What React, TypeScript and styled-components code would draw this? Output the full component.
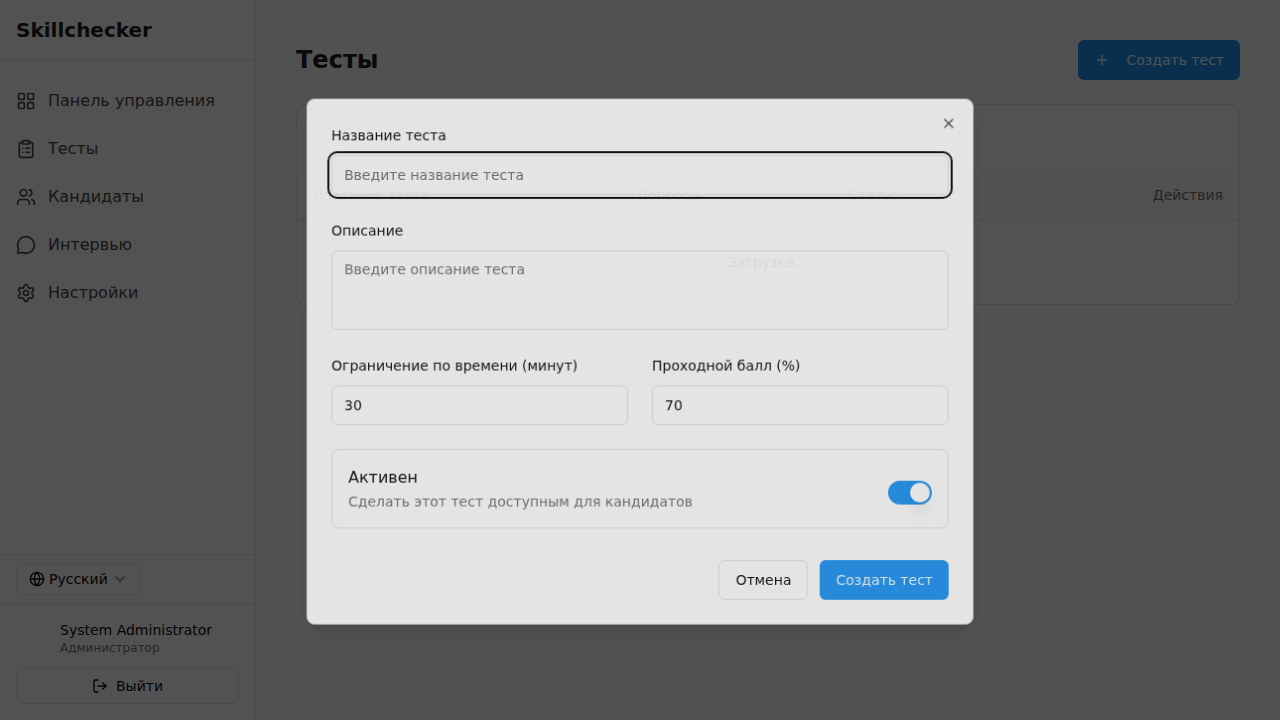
import React from "react";
import styled, { createGlobalStyle, css } from "styled-components";
import {
  LayoutGrid,
  ClipboardList,
  Users,
  MessageCircle,
  Settings,
  Globe,
  ChevronDown,
  LogOut,
  Plus,
  X,
} from "lucide-react";

const color = {
  text: "#0c0a09",
  heading: "#212121",
  muted: "#78716c",
  border: "#e7e5e4",
  primary: "#2094f3",
  nav: "#484848",
};

const GlobalStyle = createGlobalStyle`
  *, *::before, *::after { box-sizing: border-box; }
  body {
    margin: 0;
    overflow: hidden;
    color: ${color.text};
    font-family: "DejaVu Sans", sans-serif;
    font-size: 16px;
    line-height: 24px;
  }
  h1, h2, p { margin: 0; }
  button, input, textarea { font: inherit; color: inherit; }
`;

const Shell = styled.div`
  display: flex;
  height: 100vh;
  background: #fafafa;
`;

const Sidebar = styled.aside`
  display: flex;
  flex-direction: column;
  flex: 0 0 256px;
  background: #fff;
  border-right: 1px solid ${color.border};
`;

const Brand = styled.div`
  padding: 16px;
  border-bottom: 1px solid ${color.border};
  font-size: 20px;
  line-height: 28px;
  font-weight: 700;
  color: ${color.heading};
`;

const Nav = styled.nav`
  flex: 1;
  padding: 16px 0;
`;

const NavItem = styled.a`
  display: flex;
  align-items: center;
  gap: 12px;
  height: 48px;
  padding: 0 16px;
  color: ${color.nav};
`;

const LanguageBar = styled.div`
  padding: 8px 16px;
  border-top: 1px solid ${color.border};
`;

const buttonBase = css`
  display: inline-flex;
  align-items: center;
  justify-content: center;
  border-radius: 6px;
  font-size: 14px;
  line-height: 20px;
  white-space: nowrap;
`;

const LanguageButton = styled.button`
  ${buttonBase}
  display: flex;
  gap: 4px;
  height: 32px;
  padding: 0 12px;
  border: 1px solid ${color.border};
  background: #fff;
  svg:last-child { opacity: 0.5; }
`;

const Account = styled.div`
  display: flex;
  flex-direction: column;
  gap: 12px;
  padding: 16px;
  border-top: 1px solid ${color.border};
`;

const Profile = styled.div`
  display: flex;
  align-items: center;
  gap: 12px;
`;

const Avatar = styled.div`
  width: 32px;
  height: 32px;
  border-radius: 50%;
`;

const ProfileName = styled.p`
  font-size: 14px;
  line-height: 20px;
`;

const ProfileRole = styled.p`
  font-size: 12px;
  line-height: 16px;
  color: ${color.muted};
`;

const LogoutButton = styled.button`
  ${buttonBase}
  gap: 8px;
  height: 36px;
  border: 1px solid ${color.border};
  background: #fff;
`;

const Main = styled.main`
  flex: 1;
  padding: 40px;
`;

const PageHeader = styled.header`
  display: flex;
  align-items: center;
  justify-content: space-between;
  margin-bottom: 24px;
`;

const PageTitle = styled.h1`
  font-size: 24px;
  line-height: 32px;
  font-weight: 700;
  color: ${color.heading};
`;

const Button = styled.button<{ $outline?: boolean; $gap?: number }>`
  ${buttonBase}
  height: 40px;
  padding: 0 16px;
  gap: ${(p) => p.$gap ?? 0}px;
  border: ${(p) => (p.$outline ? `1px solid ${color.border}` : "0")};
  background: ${(p) => (p.$outline ? "#fff" : color.primary)};
  color: ${(p) => (p.$outline ? color.text : "#f0f8ff")};
`;

const TableCard = styled.section`
  overflow: hidden;
  border: 1px solid ${color.border};
  border-radius: 8px;
  background: #fff;
`;

const TableTools = styled.div`
  height: 66px;
`;

const HeadRow = styled.div`
  display: grid;
  grid-template-columns: 325px 210px 1fr auto;
  align-items: center;
  height: 49px;
  padding: 0 16px;
  border-bottom: 1px solid ${color.border};
  background: #fafafa;
  font-size: 14px;
  color: ${color.muted};
`;

const Loading = styled.div`
  padding: 32px 16px;
  text-align: center;
  font-size: 14px;
  line-height: 20px;
`;

const Overlay = styled.div`
  position: fixed;
  inset: 0;
  background: rgba(0, 0, 0, 0.68);
`;

const DialogLayer = styled.div`
  position: fixed;
  inset: 0;
  display: flex;
  align-items: center;
  justify-content: center;
`;

const Dialog = styled.div`
  position: relative;
  width: 672px;
  padding: 24px;
  border: 1px solid ${color.border};
  border-radius: 8px;
  background: #fff;
  box-shadow: 0 10px 15px -3px rgba(0, 0, 0, 0.1), 0 4px 6px -4px rgba(0, 0, 0, 0.1);
  opacity: 0.85;
  transform: translateY(0.3%) scale(0.9925);
  will-change: transform;
`;

const CloseButton = styled.button`
  position: absolute;
  top: 16px;
  right: 16px;
  display: flex;
  padding: 0;
  border: 0;
  background: none;
  opacity: 0.7;
`;

const Form = styled.form`
  display: flex;
  flex-direction: column;
  gap: 24px;
`;

const FieldPair = styled.div`
  display: grid;
  grid-template-columns: 1fr 1fr;
  gap: 24px;
`;

const FieldBox = styled.label`
  display: flex;
  flex-direction: column;
  gap: 8px;
  font-size: 14px;
  line-height: 24px;
`;

const control = css`
  width: 100%;
  padding: 8px 12px;
  border: 1px solid ${color.border};
  border-radius: 6px;
  outline: none;
  background: #fff;
  font-size: 14px;
  line-height: 20px;
  &::placeholder { color: ${color.muted}; opacity: 1; }
`;

const Input = styled.input<{ $focused?: boolean }>`
  ${control}
  height: 40px;
  ${(p) => p.$focused && "box-shadow: 0 0 0 2px #fff, 0 0 0 4px #0c0a09;"}
`;

const TextArea = styled.textarea`
  ${control}
  display: block;
  height: 80px;
  resize: none;
`;

const SwitchCard = styled.div`
  display: flex;
  align-items: center;
  justify-content: space-between;
  padding: 16px;
  border: 1px solid ${color.border};
  border-radius: 8px;
`;

const SwitchHint = styled.p`
  margin-top: 2px;
  font-size: 14px;
  line-height: 20px;
  color: ${color.muted};
`;

const Switch = styled.div`
  display: flex;
  justify-content: flex-end;
  width: 44px;
  height: 24px;
  margin-top: 8px;
  padding: 2px;
  border-radius: 12px;
  background: ${color.primary};
`;

const Thumb = styled.span`
  width: 20px;
  height: 20px;
  border-radius: 50%;
  background: #fff;
  box-shadow: 0 10px 15px -3px rgba(0, 0, 0, 0.1), 0 4px 6px -4px rgba(0, 0, 0, 0.1);
`;

const Actions = styled.div`
  display: flex;
  justify-content: flex-end;
  gap: 12px;
  padding-top: 8px;
`;

const navItems = [
  { icon: LayoutGrid, label: "Панель управления" },
  { icon: ClipboardList, label: "Тесты" },
  { icon: Users, label: "Кандидаты" },
  { icon: MessageCircle, label: "Интервью" },
  { icon: Settings, label: "Настройки" },
];

export default function App() {
  return (
    <>
      <GlobalStyle />
      <Shell>
        <Sidebar>
          <Brand>Skillchecker</Brand>
          <Nav>
            {navItems.map(({ icon: Icon, label }) => (
              <NavItem key={label}>
                <Icon size={20} />
                {label}
              </NavItem>
            ))}
          </Nav>
          <LanguageBar>
            <LanguageButton>
              <Globe size={16} />
              Русский
              <ChevronDown size={16} />
            </LanguageButton>
          </LanguageBar>
          <Account>
            <Profile>
              <Avatar />
              <div>
                <ProfileName>System Administrator</ProfileName>
                <ProfileRole>Администратор</ProfileRole>
              </div>
            </Profile>
            <LogoutButton>
              <LogOut size={16} />
              Выйти
            </LogoutButton>
          </Account>
        </Sidebar>
        <Main>
          <PageHeader>
            <PageTitle>Тесты</PageTitle>
            <Button $gap={16}>
              <Plus size={16} />
              Создать тест
            </Button>
          </PageHeader>
          <TableCard>
            <TableTools />
            <HeadRow>
              <span>Название теста</span>
              <span>Вопросы</span>
              <span>Статус</span>
              <span>Действия</span>
            </HeadRow>
            <Loading>Загрузка...</Loading>
          </TableCard>
        </Main>
      </Shell>
      <Overlay />
      <DialogLayer>
        <Dialog role="dialog">
          <Form>
            <FieldBox>
              Название теста
              <Input $focused placeholder="Введите название теста" />
            </FieldBox>
            <FieldBox>
              Описание
              <TextArea placeholder="Введите описание теста" />
            </FieldBox>
            <FieldPair>
              <FieldBox>
                Ограничение по времени (минут)
                <Input defaultValue="30" />
              </FieldBox>
              <FieldBox>
                Проходной балл (%)
                <Input defaultValue="70" />
              </FieldBox>
            </FieldPair>
            <SwitchCard>
              <div>
                Активен
                <SwitchHint>Сделать этот тест доступным для кандидатов</SwitchHint>
              </div>
              <Switch role="switch" aria-checked="true">
                <Thumb />
              </Switch>
            </SwitchCard>
            <Actions>
              <Button type="button" $outline>Отмена</Button>
              <Button type="button">Создать тест</Button>
            </Actions>
          </Form>
          <CloseButton type="button">
            <X size={16} />
          </CloseButton>
        </Dialog>
      </DialogLayer>
    </>
  );
}
